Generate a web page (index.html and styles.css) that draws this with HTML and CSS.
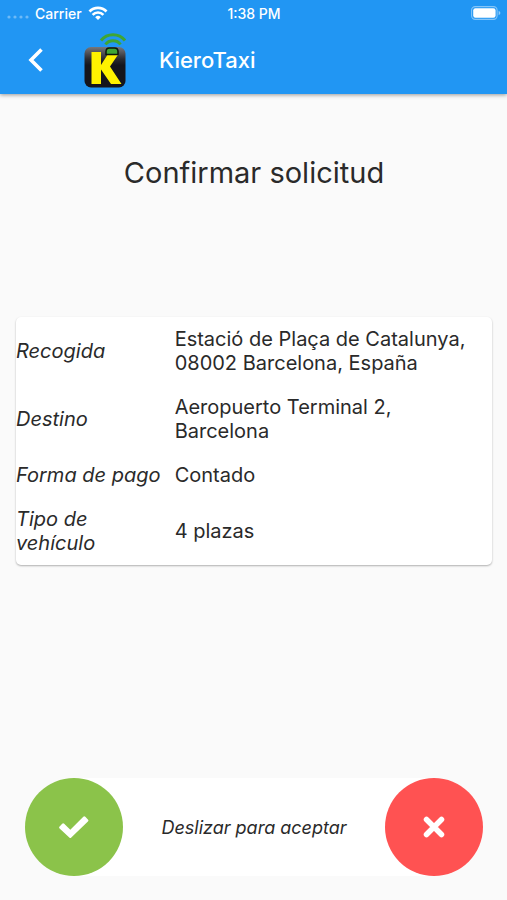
FILE: index.html
```
<!DOCTYPE html>
<html lang="es">
<head>
<meta charset="UTF-8">
<meta name="viewport" content="width=device-width, initial-scale=1.0">
<title>KieroTaxi</title>
<link rel="stylesheet" href="styles.css">
</head>
<body>
<div class="screen">
    <header class="header">
        <div class="status-bar">
            <div class="status-left">
                <svg class="signal" width="22" height="4" viewBox="0 0 22 4">
                    <circle cx="2" cy="2" r="1.6"/>
                    <circle cx="8" cy="2" r="1.6"/>
                    <circle cx="14" cy="2" r="1.6"/>
                    <circle cx="20" cy="2" r="1.6"/>
                </svg>
                <span>Carrier</span>
                <svg class="wifi" width="20" height="14" viewBox="0 0 20 14">
                    <path d="M1.5 5.4a12 12 0 0 1 17 0" fill="none" stroke="#fff" stroke-width="2.8"/>
                    <path d="M4.6 8.8a7.5 7.5 0 0 1 10.8 0" fill="none" stroke="#fff" stroke-width="2.6"/>
                    <path d="M7.2 11.2a4 4 0 0 1 5.6 0L10 14z" fill="#fff"/>
                </svg>
            </div>
            <span class="time">1:38 PM</span>
            <div class="status-right">
                <svg class="battery" width="30" height="14" viewBox="0 0 30 14">
                    <rect x="0.6" y="0.6" width="25.5" height="12.8" rx="3.6" fill="none" stroke="#fff" stroke-opacity="0.45" stroke-width="1.1"/>
                    <rect x="2.2" y="2.2" width="22.4" height="9.6" rx="2.2" fill="#fff"/>
                    <path d="M27.6 4.8q1.8 .7 1.8 2.2t-1.8 2.2z" fill="#fff" fill-opacity="0.5"/>
                </svg>
            </div>
        </div>
        <div class="app-bar">
            <button class="back" type="button" aria-label="Atrás">
                <svg width="16" height="24" viewBox="0 0 16 24">
                    <path d="M13.5 1.5L3 12l10.5 10.5" fill="none" stroke="#fff" stroke-width="3.6"/>
                </svg>
            </button>
            <svg class="logo" width="42" height="56" viewBox="0 0 42 56">
                <defs>
                    <linearGradient id="shine" x1="0" y1="0" x2="0" y2="1">
                        <stop offset="0" stop-color="#77777c"/>
                        <stop offset="0.3" stop-color="#2a2a30"/>
                        <stop offset="0.45" stop-color="#15151c"/>
                        <stop offset="1" stop-color="#15151c"/>
                    </linearGradient>
                </defs>
                <rect x="0.5" y="15" width="41" height="40.5" rx="6.5" fill="url(#shine)"/>
                <path d="M7.5 20H17v13l7-11h10.5L26 34.5 37.5 52H27L17 37.5V52H7.5z" fill="#fff200"/>
                <path d="M22 22.5v-3q0-3.500 3.5-3.500h5q3.500 0 3.500 3.500v3z" fill="#3fa535" stroke="#0b160b" stroke-width="1.5"/>
                <path d="M17 8.500C23 .7 35 .7 41 8.500" fill="none" stroke="#3fa535" stroke-width="3"/>
                <path d="M21.500 12.500C25 7.500 33 7.500 36.500 12.500" fill="none" stroke="#3fa535" stroke-width="3"/>
            </svg>
            <span class="app-title">KieroTaxi</span>
        </div>
    </header>

    <main class="content">
        <h1 class="title">Confirmar solicitud</h1>
        <table class="card">
            <tr>
                <th scope="row">Recogida</th>
                <td>Estació de Plaça de Catalunya, 08002 Barcelona, España</td>
            </tr>
            <tr>
                <th scope="row">Destino</th>
                <td>Aeropuerto Terminal 2, Barcelona</td>
            </tr>
            <tr>
                <th scope="row">Forma de pago</th>
                <td>Contado</td>
            </tr>
            <tr>
                <th scope="row">Tipo de vehículo</th>
                <td>4 plazas</td>
            </tr>
        </table>
    </main>

    <footer class="slider">
        <button class="round accept" type="button" aria-label="Aceptar">
            <svg width="30" height="24" viewBox="0 0 30 24">
                <path d="M.6 11.400L3.200 8.800q1-1 2 0L11.300 14.800 24.300 1.800q1-1 2 0l2.600 2.600q1 1 0 2L12.300 22.600q-1 1-2 0L.6 13.400q-1-1 0-2z" fill="#fff"/>
            </svg>
        </button>
        <span class="hint">Deslizar para aceptar</span>
        <button class="round cancel" type="button" aria-label="Cancelar">
            <svg width="22" height="22" viewBox="0 0 22 22">
                <path d="M3.5 3.5l15 15M18.5 3.5l-15 15" fill="none" stroke="#fff" stroke-width="5.5" stroke-linecap="round"/>
            </svg>
        </button>
    </footer>
</div>
</body>
</html>
```
FILE: styles.css
```
* {
    box-sizing: border-box;
}

body {
    margin: 0;
    font-family: Inter, "Liberation Sans", sans-serif;
    background-color: #fafafa;
    color: #2a2a2a;
}

.screen {
    min-height: 100vh;
    display: flex;
    flex-direction: column;
}

button {
    border: 0;
    padding: 0;
    cursor: pointer;
}

svg {
    display: block;
}

/* Header */
.header {
    background-color: #2196f3;
    color: #fff;
    box-shadow: 0 1px 4px rgba(0, 0, 0, 0.4);
}

.status-bar {
    display: grid;
    grid-template-columns: 1fr auto 1fr;
    align-items: center;
    height: 26px;
    padding: 0 6px 0 7px;
    font-size: 14px;
    font-weight: 500;
}

.status-left {
    display: flex;
    align-items: center;
    gap: 6px;
}

.signal {
    fill: rgba(255, 255, 255, 0.35);
    margin-top: 8px;
}

.status-right {
    display: flex;
    justify-content: flex-end;
}

.app-bar {
    display: flex;
    align-items: center;
    height: 68px;
    padding: 0 28px;
}

.back {
    width: 16px;
    margin-right: 40px;
    background: none;
}

.logo {
    margin-right: 33px;
}

.app-title {
    font-size: 22px;
    font-weight: 500;
}

/* Request details */
.content {
    flex: 1;
    padding: 60px 15px 60px 16px;
}

.title {
    margin: 0 0 125px;
    font-size: 29px;
    line-height: 38px;
    font-weight: 400;
    text-align: center;
}

.card {
    width: 100%;
    table-layout: fixed;
    border-spacing: 0;
    background-color: #fff;
    border-radius: 5px;
    box-shadow: 0 1px 2px rgba(0, 0, 0, 0.3);
    font-size: 20px;
    line-height: 24px;
}

.card th,
.card td {
    padding: 10px 10px 10px 0;
    text-align: left;
    vertical-align: middle;
    font-weight: 400;
}

.card th {
    width: 33.33%;
    font-style: italic;
}

/* Slide to accept */
.slider {
    display: flex;
    align-items: center;
    justify-content: space-between;
    margin: 0 24px 24px 25px;
    border-radius: 49px;
    background-color: #fff;
}

.round {
    display: flex;
    align-items: center;
    justify-content: center;
    width: 98px;
    height: 98px;
    border-radius: 50%;
}

.accept {
    background-color: #8bc34a;
}

.cancel {
    background-color: #ff5252;
}

.hint {
    font-size: 18px;
    font-style: italic;
}
```
